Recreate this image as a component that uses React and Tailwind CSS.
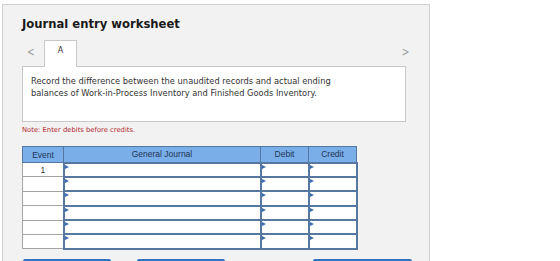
import React from "react";

const rows = ["1", "", "", "", "", ""];

const Marker = () => (
  <span className="absolute left-0 top-[1px] w-0 h-0 border-y-[2px] border-y-transparent border-l-[4px] border-l-[#3b6db3]" />
);

const JournalWorksheet = () => {
  return (
    <div className="w-[560px] h-[261px] overflow-hidden bg-white" style={{ fontFamily: '"DejaVu Sans", Verdana, sans-serif' }}>
      <div className="ml-[2px] mt-[4px] w-[428px] h-[300px] border border-[#d0d0d0] bg-[#f2f2f2] pl-[19px] pt-[11px]">
        <h1 className="text-[11.6px] leading-[16px] font-bold text-[#1a1a1a]">Journal entry worksheet</h1>

        <div className="flex items-end mt-[8px] w-[389px] h-[26px]">
          <span className="text-[#9a9a9a] text-[13px] leading-none mb-[8px] ml-[2px] w-[20px] scale-x-[0.7]">&lt;</span>
          <div className="relative z-10 -mb-px w-[33px] h-[27px] bg-white border border-b-0 border-[#c8c8c8] flex justify-center pt-[4px] text-[8px] text-[#333]">
            A
          </div>
          <div className="flex-1" />
          <span className="text-[#9a9a9a] text-[13px] leading-none mb-[8px] scale-x-[0.7]">&gt;</span>
        </div>

        <div className="w-[384px] h-[56px] bg-white border border-[#c8c8c8] pl-[8px] pt-[8px] text-[8.3px] leading-[12px] text-[#333]">
          <p>Record the difference between the unaudited records and actual ending</p>
          <p>balances of Work-in-Process Inventory and Finished Goods Inventory.</p>
        </div>

        <p className="mt-[3px] text-[6.8px] leading-[10px] text-[#b3262c]">Note: Enter debits before credits.</p>

        <table
          className="mt-[11px] border-collapse text-[8.5px] leading-[10px] text-[#1d3557]"
          style={{ fontFamily: '"Liberation Sans", Arial, sans-serif' }}
        >
          <thead>
            <tr className="h-[16px] bg-[#7aaee8]">
              <th className="w-[41px] p-0 border border-[#56779f] font-normal">Event</th>
              <th className="w-[197px] p-0 border border-[#56779f] font-normal">General Journal</th>
              <th className="w-[48px] p-0 border border-[#56779f] font-normal">Debit</th>
              <th className="w-[48px] p-0 border border-[#56779f] font-normal">Credit</th>
            </tr>
          </thead>
          <tbody>
            {rows.map((ev, i) => (
              <tr key={i} className="h-[14.4px]">
                <td className="p-0 border border-[#a3a3a3] bg-white text-center text-[#333]">{ev}</td>
                <td className="relative p-0 border-2 border-[#56779f] bg-white"><Marker /></td>
                <td className="relative p-0 border-2 border-[#56779f] bg-white"><Marker /></td>
                <td className="relative p-0 border-2 border-[#56779f] bg-white"><Marker /></td>
              </tr>
            ))}
          </tbody>
        </table>

        <div className="flex mt-[9px] ml-[1px]">
          <div className="w-[88px] h-[24px] bg-[#2f74c0] rounded-[2px]" />
          <div className="w-[88px] h-[24px] bg-[#2f74c0] rounded-[2px] ml-[26px]" />
          <div className="w-[99px] h-[24px] bg-[#2f74c0] rounded-[2px] ml-[88px]" />
        </div>
      </div>
    </div>
  );
};

export default function App() {
  return <JournalWorksheet />;
}
